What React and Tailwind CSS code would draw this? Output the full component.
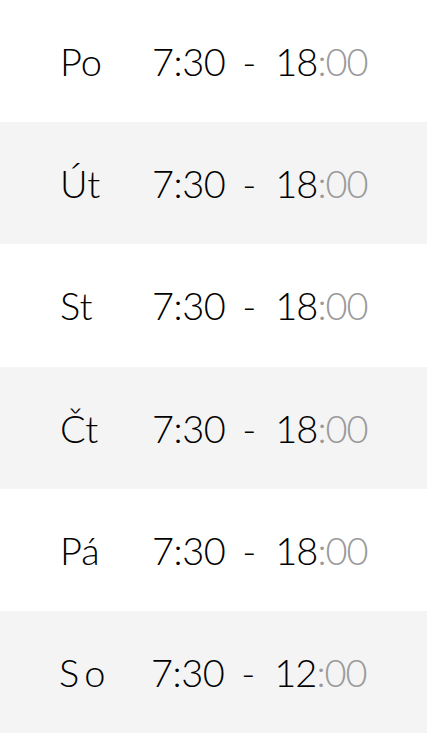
const hours = [
  { day: "Po", from: "7:30", to: "18" },
  { day: "Út", from: "7:30", to: "18" },
  { day: "St", from: "7:30", to: "18" },
  { day: "Čt", from: "7:30", to: "18" },
  { day: "Pá", from: "7:30", to: "18" },
  { day: "So", from: "7:30", to: "12", wide: true },
];

export default function App() {
  return (
    <div className="w-[427px] bg-white font-['Lato','Open_Sans',sans-serif] font-light text-black">
      {hours.map((row, idx) => (
        <div
          key={idx}
          className={`flex items-center h-[122.2px] pl-[60px] text-[38px] leading-none ${
            idx % 2 === 1 ? "bg-[#f4f4f4]" : "bg-white"
          }`}
        >
          <span className={row.wide ? "w-[92px] -ml-[1px] tracking-[5px]" : "w-[92px]"}>{row.day}</span>
          <span className="tracking-[-0.5px]">{row.from}</span>
          <span className="ml-[17px] mr-[19px]">-</span>
          <span className="tracking-[-1px]">
            {row.to}
            <span className="text-[#9a9a9a] tracking-[-1px]">:00</span>
          </span>
        </div>
      ))}
    </div>
  );
}
